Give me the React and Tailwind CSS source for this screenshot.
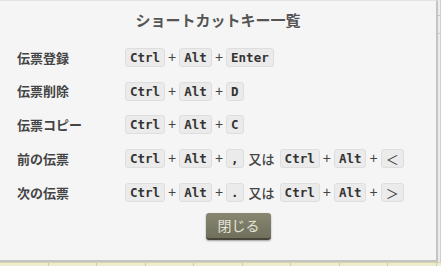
const jp = { fontFamily: '"Noto Sans CJK JP", "Noto Sans", sans-serif' }
const mono = { fontFamily: '"DejaVu Sans Mono", "Liberation Mono", monospace' }
const plus = { fontFamily: '"Liberation Sans", Arial, sans-serif' }

const shortcuts = [
  { label: '伝票登録', keys: [['Ctrl', 'Alt', 'Enter']] },
  { label: '伝票削除', keys: [['Ctrl', 'Alt', 'D']] },
  { label: '伝票コピー', keys: [['Ctrl', 'Alt', 'C']] },
  { label: '前の伝票', keys: [['Ctrl', 'Alt', ','], ['Ctrl', 'Alt', '＜']] },
  { label: '次の伝票', keys: [['Ctrl', 'Alt', '.'], ['Ctrl', 'Alt', '＞']] },
]

function Key({ children }) {
  const wide = children === '＜' || children === '＞'
  return (
    <kbd
      className="h-[19px] px-[4px] rounded-[3px] border border-[#dedede] bg-[#ebebeb] text-[12.5px] font-bold leading-[17px] text-[#333] flex items-center"
      style={wide ? { ...jp, fontWeight: 400, fontSize: '13px' } : mono}
    >
      {children}
    </kbd>
  )
}

function Combo({ keys }) {
  return (
    <div className="flex items-center">
      {keys.map((k, i) => (
        <div key={i} className="flex items-center">
          {i > 0 && <span className="px-[3px] text-[14px] leading-[19px] text-[#444]" style={plus}>+</span>}
          <Key>{k}</Key>
        </div>
      ))}
    </div>
  )
}

export default function App() {
  return (
    <div className="w-[441px] h-[266px] overflow-hidden flex flex-col bg-[#ececec]">
      <div className="flex">
        <div className="w-[438px] h-[262px] bg-[#f5f5f5] border-r-2 border-b-2 border-[#c4c4c4] border-t border-t-[#e2e2e2] flex flex-col shrink-0">
          <h2 className="pt-[8px] text-center text-[15px] font-bold leading-[22px] text-[#555]" style={jp}>
            ショートカットキー一覧
          </h2>

          <div className="mt-[17px] pl-[17px] flex flex-col gap-[14.7px]">
            {shortcuts.map((s) => (
              <div key={s.label} className="flex items-center h-[19px]">
                <span className="w-[108px] text-[13px] font-bold text-[#444]" style={jp}>{s.label}</span>
                <div className="flex items-center">
                  {s.keys.map((combo, i) => (
                    <div key={i} className="flex items-center">
                      {i > 0 && <span className="px-[5px] text-[13px] font-medium text-[#444]" style={jp}>又は</span>}
                      <Combo keys={combo} />
                    </div>
                  ))}
                </div>
              </div>
            ))}
          </div>

          <div className="mt-[11px] pl-[206px]">
            <button
              className="w-[65px] h-[27px] rounded-[3px] bg-gradient-to-b from-[#878772] to-[#6f6f5b] border-b-2 border-[#45453a] text-[14px] text-[#e4e4d8] shadow-[0_1px_2px_rgba(0,0,0,0.35)]"
              style={jp}
            >
              閉じる
            </button>
          </div>
        </div>
        <div className="flex-1 border-r border-[#cfcfcf] flex flex-col">
          <div className="mt-[15px] h-px bg-[#c8c8c8]" />
          <div className="mt-[17px] h-px bg-[#c8c8c8]" />
        </div>
      </div>
      <div className="flex-1 flex bg-[#efedcf] border-t border-[#d8d4aa]">
        {Array.from({ length: 10 }).map((_, i) => (
          <div key={i} className="w-[48.5px] shrink-0 border-r border-[#cfcbb0]" />
        ))}
      </div>
    </div>
  )
}
